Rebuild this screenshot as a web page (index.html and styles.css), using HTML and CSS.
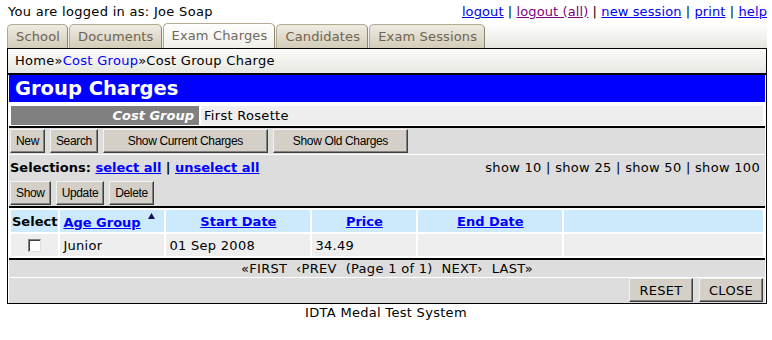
FILE: index.html
```html
<!DOCTYPE html>
<html lang="en">
<head>
    <meta charset="UTF-8">
    <title>Cost Group Charge - IDTA Medal Test System</title>
    <link rel="stylesheet" href="styles.css">
</head>
<body>
    <div class="topbar">
        <span>You are logged in as: Joe Soap</span>
        <span class="toplinks">
            <a href="#">logout</a> | <a href="#" class="visited">logout (all)</a> | <a href="#">new session</a> | <a href="#">print</a> | <a href="#">help</a>
        </span>
    </div>

    <ul class="tabs">
        <li class="tab">School</li>
        <li class="tab">Documents</li>
        <li class="tab active">Exam Charges</li>
        <li class="tab">Candidates</li>
        <li class="tab">Exam Sessions</li>
    </ul>

    <div class="panel">
        <div class="crumbs">Home&raquo;<a href="#">Cost Group</a>&raquo;Cost Group Charge</div>

        <div class="content">
            <h1 class="title">Group Charges</h1>

            <div class="parent-row">
                <div class="parent-label">Cost Group</div>
                <div class="parent-value">First Rosette</div>
            </div>

            <div class="toolbar">
                <div class="btn-row">
                    <button class="btn">New</button>
                    <button class="btn">Search</button>
                    <button class="btn btn-current">Show Current Charges</button>
                    <button class="btn btn-old">Show Old Charges</button>
                </div>
                <div class="select-row">
                    <span><b>Selections:</b> <a href="#" class="bold-link">select all</a> <b>|</b> <a href="#" class="bold-link">unselect all</a></span>
                    <span class="page-size">show 10 | show 25 | show 50 | show 100</span>
                </div>
                <div class="btn-row">
                    <button class="btn">Show</button>
                    <button class="btn">Update</button>
                    <button class="btn">Delete</button>
                </div>
            </div>

            <table class="grid">
                <thead>
                    <tr>
                        <th class="col-select">Select</th>
                        <th class="col-age left"><a href="#">Age Group</a><svg class="sort" width="7" height="6" viewBox="0 0 7 6"><path d="M3.5 0 L7 6 L0 6 Z" fill="#101060"/></svg></th>
                        <th class="col-date"><a href="#">Start Date</a></th>
                        <th class="col-price"><a href="#">Price</a></th>
                        <th class="col-date"><a href="#">End Date</a></th>
                        <th></th>
                    </tr>
                </thead>
                <tbody>
                    <tr>
                        <td class="center"><input type="checkbox" class="check"></td>
                        <td>Junior</td>
                        <td>01 Sep 2008</td>
                        <td>34.49</td>
                        <td></td>
                        <td></td>
                    </tr>
                </tbody>
            </table>

            <div class="pager">&laquo;FIRST&nbsp;&nbsp;&lsaquo;PREV&nbsp;&nbsp;(Page 1 of 1)&nbsp;&nbsp;NEXT&rsaquo;&nbsp;&nbsp;LAST&raquo;</div>
            <div class="footer-row">
                <button class="btn btn-wide">RESET</button>
                <button class="btn btn-wide">CLOSE</button>
            </div>
        </div>
    </div>

    <div class="sysname">IDTA Medal Test System</div>
</body>
</html>
```

FILE: styles.css
```css
body {
    margin: 0;
    padding: 3px 5px 0 7px;
    font-family: "DejaVu Sans", Verdana, sans-serif;
    font-size: 13px;
    letter-spacing: 0.3px;
    color: #000;
    background: #fff;
}
b, th {
    letter-spacing: 0;
}
a {
    color: #0000ee;
}
a.visited {
    color: #800080;
}
.topbar {
    display: flex;
    justify-content: space-between;
    line-height: 17px;
    padding-left: 1px;
}
.toplinks {
    letter-spacing: 0.1px;
}
.tabs {
    list-style: none;
    display: flex;
    align-items: flex-end;
    gap: 1px;
    margin: 3px 0 0;
    padding: 0;
    height: 25px;
    background: linear-gradient(#ffffff, #e6e6e0);
}
.tab {
    height: 23px;
    line-height: 23px;
    padding: 0 7px 0 8px;
    letter-spacing: 0.15px;
    color: #6f6354;
    background: linear-gradient(#eeebe2, #d3ccb8);
    border: 1px solid #b3aa94;
    border-bottom: none;
    border-right-color: #8f866f;
    border-radius: 5px 5px 0 0;
}
.tab.active {
    height: 24px;
    color: #6e6a62;
    background: linear-gradient(#ffffff, #efeee8);
}
.panel {
    border: 1px solid #000;
}
.crumbs {
    height: 24px;
    line-height: 24px;
    padding-left: 7px;
    background: linear-gradient(#fbfbf9, #e7e7e2);
    border-bottom: 2px solid #000;
}
.crumbs a {
    color: #0000ff;
    text-decoration: none;
}
.content {
    padding: 0 1px;
}
.title {
    margin: 0;
    height: 27px;
    line-height: 27px;
    padding-left: 6px;
    background: #0000ff;
    color: #fff;
    font-size: 19.5px;
    font-weight: bold;
    letter-spacing: 0;
}
.parent-row {
    display: flex;
    gap: 2px;
    padding: 4px 2px 1px;
    border-bottom: 2px solid #000;
}
.parent-label {
    width: 183px;
    padding-right: 5px;
    text-align: right;
    background: #808080;
    color: #fff;
    font-weight: bold;
    font-style: italic;
    letter-spacing: 0;
    line-height: 19px;
}
.parent-value {
    flex: 1;
    padding-left: 3px;
    background: #eeeeee;
    line-height: 19px;
}
.toolbar {
    background: #dddddd;
    border-bottom: 2px solid #000;
}
.btn-row {
    display: flex;
    gap: 5px;
    padding: 1px 1px;
}
.btn-row + .select-row {
    border-top: 1px solid #fff;
}
.btn {
    height: 24px;
    margin: 0;
    padding: 0 5px;
    font-family: "Liberation Sans", Arial, sans-serif;
    font-size: 12px;
    letter-spacing: -0.35px;
    color: #000;
    background: #d4d0c8;
    border: 1px solid;
    border-color: #f4f3f0 #404040 #404040 #f4f3f0;
    box-shadow: inset -1px -1px 0 #808080;
}
.btn-current {
    width: 165px;
}
.btn-old {
    width: 135px;
}
.select-row {
    display: flex;
    justify-content: space-between;
    align-items: center;
    height: 25px;
    padding: 0 5px 0 1px;
}
.bold-link {
    font-weight: bold;
    letter-spacing: 0;
    color: #0000ff;
}
.grid {
    width: 100%;
    border-spacing: 2px;
}
.grid th {
    height: 22px;
    padding: 0 3px;
    background: #cdeafc;
    font-weight: bold;
    text-align: center;
}
.grid th a {
    color: #0000ff;
}
.grid th.left {
    text-align: left;
}
.grid th.col-select {
    width: 45px;
    padding: 0 1px;
}
.col-age {
    width: 98px;
}
.col-date {
    width: 138px;
}
.col-price {
    width: 98px;
}
.sort {
    margin-left: 7px;
    vertical-align: 8px;
}
.grid td {
    height: 22px;
    padding: 0 3px;
    background: #eeeeee;
}
.grid td.center {
    text-align: center;
}
.check {
    appearance: none;
    width: 13px;
    height: 13px;
    margin: 4px 0 0;
    background: #fff;
    border: 1px solid;
    border-color: #808080 #e0e0e0 #e0e0e0 #808080;
    box-shadow: inset 1px 1px 0 #404040;
}
.pager {
    border-top: 2px solid #000;
    background: #dddddd;
    text-align: center;
    height: 17px;
    line-height: 17px;
}
.footer-row {
    display: flex;
    justify-content: flex-end;
    gap: 6px;
    padding: 0 2px 1px;
    border-top: 1px solid #fff;
    background: #dddddd;
}
.btn-wide {
    font-family: "DejaVu Sans", Verdana, sans-serif;
    font-size: 13px;
    letter-spacing: 0.3px;
    width: 64px;
}
.sysname {
    text-align: center;
    padding-top: 1px;
    margin-left: -7px;
    margin-right: -5px;
}
```
